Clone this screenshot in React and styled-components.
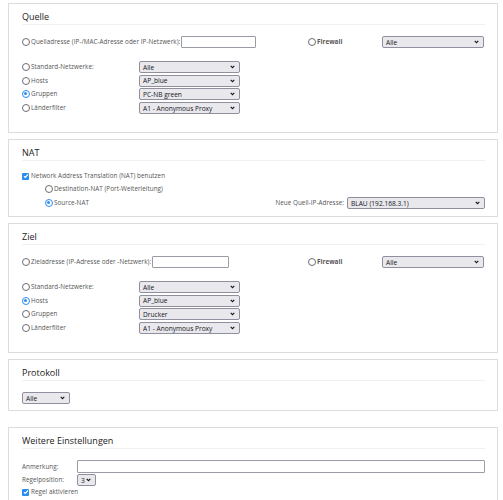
import React from "react";
import styled, { createGlobalStyle } from "styled-components";

const GlobalStyle = createGlobalStyle`
  body {
    margin: 0;
    background: #fff;
    font-family: "Open Sans", "Noto Sans", sans-serif;
    color: #333;
  }
`;

const Page = styled.div`
  width: 490px;
  padding: 3px 0 0 8px;
  display: flex;
  flex-direction: column;
`;

const Panel = styled.section`
  border: 1px solid #dcdcdc;
  padding: 0 12px ${(p) => p.$bottom || 7}px 13px;
  margin-bottom: ${(p) => p.$gap || 6}px;
  background: #fff;
`;

const Title = styled.h2`
  margin: 0 0 ${(p) => p.$after || 11}px;
  padding-top: 6px;
  font-size: 9px;
  line-height: 14px;
  font-weight: 400;
  color: #222;
  border-bottom: 1px solid #f0f0f0;
`;

const Label = styled.label`
  display: flex;
  align-items: center;
  gap: 1px;
  font-size: 6.3px;
  letter-spacing: 0.05px;
  line-height: 10px;
  color: #555;
  white-space: nowrap;
  font-weight: ${(p) => (p.$bold ? 700 : 400)};
  padding-left: ${(p) => p.$indent || 0}px;
  margin-top: ${(p) => p.$top || 0}px;
`;

const Radio = styled.span`
  box-sizing: border-box;
  width: 8px;
  height: 8px;
  border-radius: 50%;
  flex: none;
  border: ${(p) => (p.$checked ? "1.5px solid #2a8df0" : "1px solid #6d6d75")};
  position: relative;
  background: #fff;

  &::after {
    content: "";
    display: ${(p) => (p.$checked ? "block" : "none")};
    position: absolute;
    left: 1px;
    top: 1px;
    width: 3px;
    height: 3px;
    border-radius: 50%;
    background: #2a8df0;
  }
`;

const Check = styled.span`
  width: 7px;
  height: 7px;
  flex: none;
  border-radius: 1px;
  background: #2a8df0;
  display: flex;
  align-items: center;
  justify-content: center;
  margin-right: 1px;
`;

const TextInput = styled.div`
  box-sizing: border-box;
  height: ${(p) => p.$h || 12}px;
  width: ${(p) => (p.$w ? `${p.$w}px` : "auto")};
  flex: ${(p) => (p.$w ? "none" : "1")};
  border: 1px solid #9b9ba6;
  border-radius: 1px;
  background: #fff;
`;

const SelectBox = styled.div`
  box-sizing: border-box;
  width: ${(p) => p.$w}px;
  height: 12px;
  border: 1px solid #8f8f9d;
  border-radius: 2px;
  background: #e9e9ed;
  display: flex;
  align-items: center;
  justify-content: space-between;
  padding: 0 4px 0 3px;
  font-size: 6.6px;
  font-weight: 500;
  color: #15141a;
  white-space: nowrap;
`;

const TopRow = styled.div`
  display: grid;
  grid-template-columns: 286px 74px 102px;
  align-items: center;
  height: 12px;
`;

const SelectGrid = styled.div`
  display: grid;
  grid-template-columns: 117px 101px;
  row-gap: 1.7px;
  align-items: center;
  margin-top: 13px;
`;

const NatRows = styled.div`
  display: flex;
  flex-direction: column;
  gap: 3px;
`;

const SplitRow = styled.div`
  display: flex;
  align-items: center;
  justify-content: space-between;
  height: 12px;
`;

const RightGroup = styled.div`
  display: flex;
  align-items: center;
  gap: 3px;
`;

const FormGrid = styled.div`
  display: grid;
  grid-template-columns: 55px 1fr;
  row-gap: 1px;
  align-items: center;
`;

const Chevron = () => (
  <svg width="5" height="4" viewBox="0 0 5 4">
    <path d="M0.7 0.9 L2.5 2.7 L4.3 0.9" fill="none" stroke="#15141a" strokeWidth="1.1" />
  </svg>
);

const Select = ({ w, children }) => (
  <SelectBox $w={w}>
    <span>{children}</span>
    <Chevron />
  </SelectBox>
);

const Tick = () => (
  <svg width="6" height="6" viewBox="0 0 6 6">
    <path d="M1 3.2 L2.4 4.5 L5 1.4" fill="none" stroke="#fff" strokeWidth="1.2" />
  </svg>
);

const networkRows = (rows) =>
  rows.map((r) => (
    <React.Fragment key={r.label}>
      <Label>
        <Radio $checked={r.checked} />
        {r.label}
      </Label>
      <Select w={101}>{r.value}</Select>
    </React.Fragment>
  ));

const AddressSection = ({ title, addrLabel, inputW, rows }) => (
  <Panel $bottom={18}>
    <Title>{title}</Title>
    <TopRow>
      <Label>
        <Radio />
        {addrLabel}
        <TextInput $w={inputW} />
      </Label>
      <Label $bold>
        <Radio />
        Firewall
      </Label>
      <Select w={102}>Alle</Select>
    </TopRow>
    <SelectGrid>{networkRows(rows)}</SelectGrid>
  </Panel>
);

export default function App() {
  return (
    <>
      <GlobalStyle />
      <Page>
        <AddressSection
          title="Quelle"
          addrLabel="Quelladresse (IP-/MAC-Adresse oder IP-Netzwerk):"
          inputW={75}
          rows={[
            { label: "Standard-Netzwerke:", value: "Alle" },
            { label: "Hosts", value: "AP_blue" },
            { label: "Gruppen", value: "PC-NB green", checked: true },
            { label: "Länderfilter", value: "A1 - Anonymous Proxy" },
          ]}
        />

        <Panel $bottom={7}>
          <Title $after={10}>NAT</Title>
          <NatRows>
            <Label>
              <Check>
                <Tick />
              </Check>
              Network Address Translation (NAT) benutzen
            </Label>
            <Label $indent={23}>
              <Radio />
              Destination-NAT (Port-Weiterleitung)
            </Label>
            <SplitRow>
              <Label $indent={23}>
                <Radio $checked />
                Source-NAT
              </Label>
              <RightGroup>
                <Label>Neue Quell-IP-Adresse:</Label>
                <Select w={138}>BLAU (192.168.3.1)</Select>
              </RightGroup>
            </SplitRow>
          </NatRows>
        </Panel>

        <AddressSection
          title="Ziel"
          addrLabel="Zieladresse (IP-Adresse oder -Netzwerk):"
          inputW={77}
          rows={[
            { label: "Standard-Netzwerke:", value: "Alle" },
            { label: "Hosts", value: "AP_blue", checked: true },
            { label: "Gruppen", value: "Drucker" },
            { label: "Länderfilter", value: "A1 - Anonymous Proxy" },
          ]}
        />

        <Panel $bottom={6} $gap={16}>
          <Title>Protokoll</Title>
          <Select w={48}>Alle</Select>
        </Panel>

        <Panel $bottom={10}>
          <Title>Weitere Einstellungen</Title>
          <FormGrid>
            <Label>Anmerkung:</Label>
            <TextInput $h={13} />
            <Label>Regelposition:</Label>
            <Select w={19}>3</Select>
          </FormGrid>
          <Label $top={1}>
            <Check>
              <Tick />
            </Check>
            Regel aktivieren
          </Label>
        </Panel>
      </Page>
    </>
  );
}
